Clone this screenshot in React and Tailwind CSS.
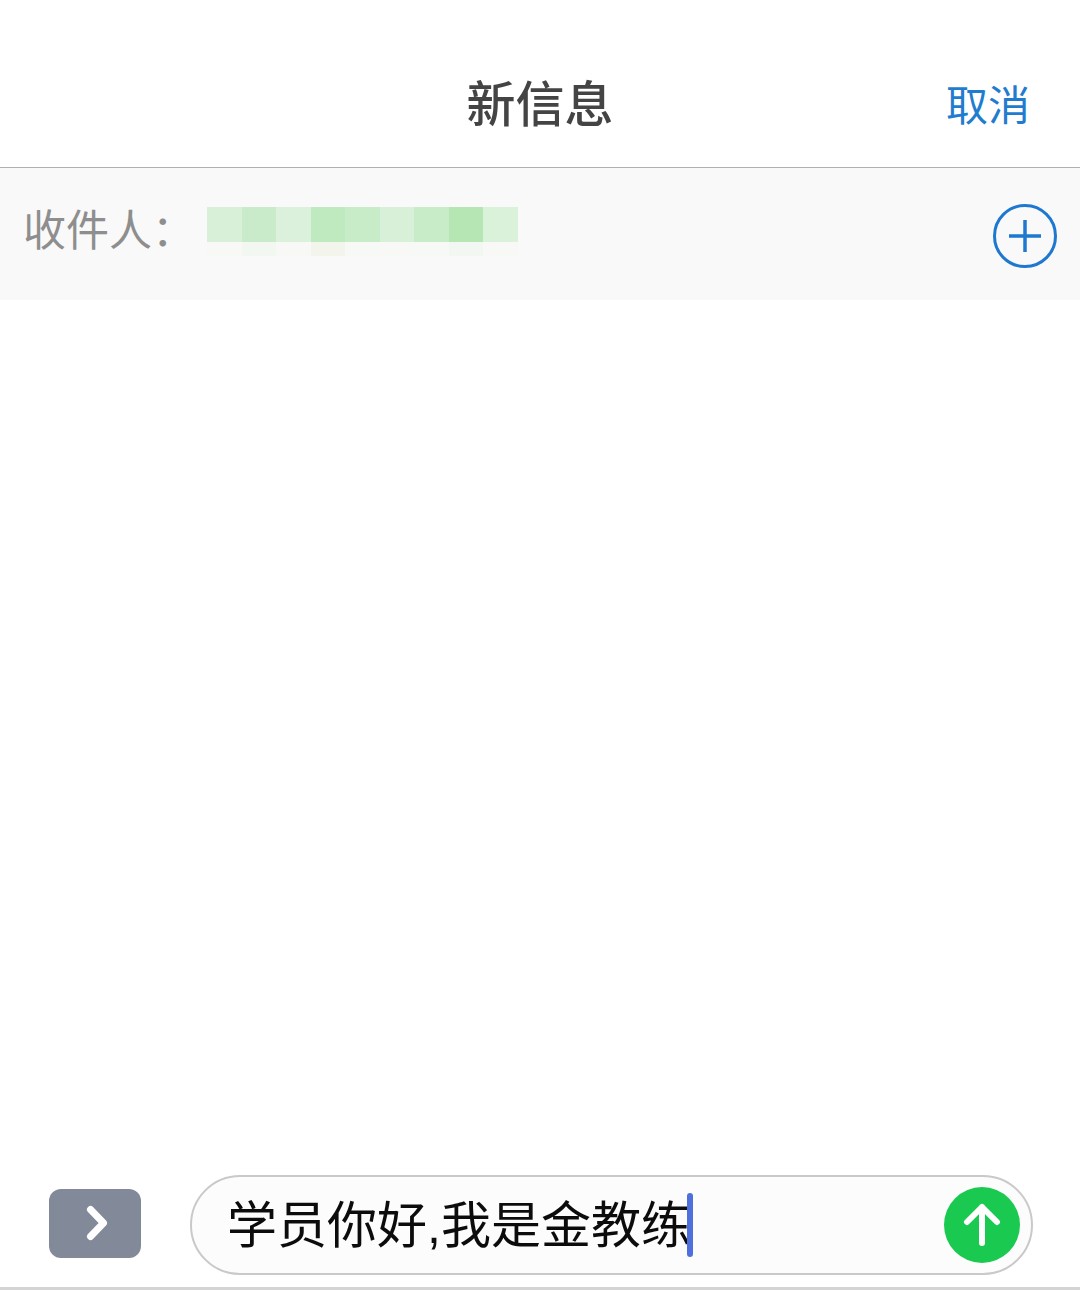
import React from 'react';

const blocks = ['bg-[#d9f0d8]', 'bg-[#c9ebc9]', 'bg-[#dcf1db]', 'bg-[#bfeabf]', 'bg-[#c9ecc8]', 'bg-[#d9f0d8]', 'bg-[#c8ecc8]', 'bg-[#b5e6b4]', 'bg-[#daf2da]'];
const shadows = ['bg-[#f8f9f7]', 'bg-[#f3f7f2]', 'bg-[#f8f9f7]', 'bg-[#f3f5ec]', 'bg-[#f7f9f6]', 'bg-[#f8f9f7]', 'bg-[#f7f9f6]', 'bg-[#f3f7f2]', 'bg-[#f8f9f7]'];

const App = () => {
  return (
    <div className="flex h-[1290px] w-[1080px] flex-col overflow-hidden bg-white font-['Noto_Sans_CJK_SC',sans-serif]">
      {/* Title bar */}
      <header className="relative flex h-[168px] shrink-0 items-start border-b border-[#b0b0b0] bg-white">
        <h1 className="mt-[65px] w-full text-center text-[49px] leading-[72px] font-medium text-[#444444]">新信息</h1>
        <button className="absolute top-[68px] right-[50px] text-[42px] leading-[70px] text-[#1f7cce]">取消</button>
      </header>

      {/* Recipient row */}
      <div className="flex h-[132px] shrink-0 items-start bg-[#f9f9f9] pl-[23px]">
        <span className="mt-[28px] w-[184px] text-[43px] leading-[62px] font-normal text-[#8e8e8e]">收件人：</span>
        <div className="mt-[39px] flex flex-col">
          <div className="flex">
            {blocks.map((c, i) => (
              <div key={i} className={`h-[35px] w-[34.5px] ${c}`} />
            ))}
          </div>
          <div className="flex">
            {shadows.map((c, i) => (
              <div key={i} className={`h-[14px] w-[34.5px] ${c}`} />
            ))}
          </div>
        </div>
        <button className="ml-auto mt-[35px] mr-[22px]">
          <svg width="66" height="66" viewBox="0 0 66 66" fill="none" stroke="#1f78cf">
            <circle cx="33" cy="33" r="30.5" strokeWidth="3" />
            <path d="M17 33H49M33 17V49" strokeWidth="3.5" />
          </svg>
        </button>
      </div>

      <div className="flex-1 bg-white" />

      {/* Compose bar */}
      <div className="flex shrink-0 items-center pl-[49px]">
        <button className="mb-[4px] flex h-[69px] w-[92px] items-center justify-center rounded-[12px] bg-[#828a99]">
          <svg width="28" height="40" viewBox="0 0 28 40" fill="none" stroke="#ffffff" strokeWidth="7" strokeLinecap="round" strokeLinejoin="round">
            <path d="M9.5 6.5L22.5 20L9.5 33.5" />
          </svg>
        </button>
        <div className="ml-[49px] flex h-[100px] w-[843px] items-center rounded-[50px] border-2 border-[#c9c9c9] bg-[#fcfcfc] pr-[11px] pl-[35px]">
          <span className="pt-[2px] text-[50px] leading-[72px] text-[#0c0c0c] font-['Liberation_Sans','Noto_Sans_CJK_SC',sans-serif]">学员你好,我是金教练</span>
          <span className="-ml-[4px] h-[64px] w-[6px] rounded-full bg-[#4f6fdc]" />
          <button className="ml-auto flex h-[76px] w-[76px] items-center justify-center rounded-full bg-[#1ac94f]">
            <svg width="38" height="46" viewBox="0 0 38 46" fill="none" stroke="#ffffff" strokeWidth="6" strokeLinecap="round" strokeLinejoin="round">
              <path d="M19 41V5M4 20L19 5L34 20" />
            </svg>
          </button>
        </div>
      </div>
      <div className="mt-[12px] h-[3px] shrink-0 bg-[#d4d4d4]" />
    </div>
  );
};

export default App;
